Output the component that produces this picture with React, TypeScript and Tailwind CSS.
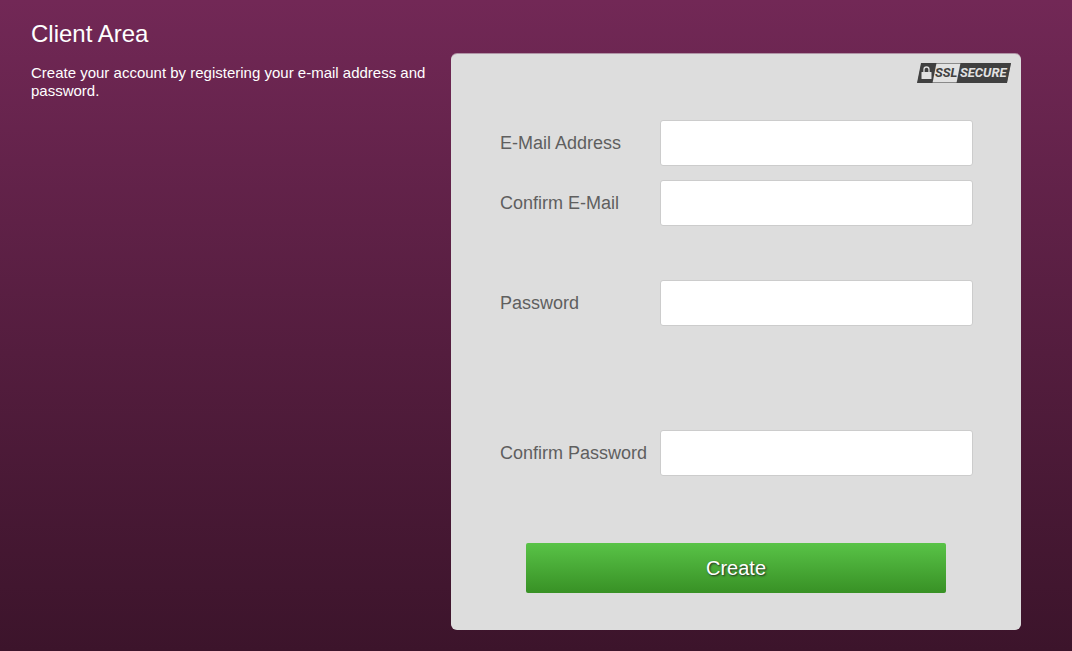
import { useState } from "react";
import type { FormEvent } from "react";

type Field = {
  id: string;
  label: string;
  type: string;
  space: string;
};

const fields: Field[] = [
  { id: "email", label: "E-Mail Address", type: "email", space: "" },
  { id: "confirmEmail", label: "Confirm E-Mail", type: "email", space: "mt-3.5" },
  { id: "password", label: "Password", type: "password", space: "mt-[54px]" },
  { id: "confirmPassword", label: "Confirm Password", type: "password", space: "mt-[104px]" },
];

const SslBadge = () => (
  <svg width="94" height="20" viewBox="0 0 94 20" role="img" aria-label="SSL Secure">
    <path d="M5 0.5H93.5L89.5 19.5H1Z" fill="#e2e2e2" stroke="#8a8a8a" />
    <path d="M4 0H19.5L15.5 20H0Z" fill="#404040" />
    <path d="M43.5 0H94L90 20H39.5Z" fill="#404040" />
    <path d="M7 9V6.500a2.500 2.500 0 0 1 5 0V9" fill="none" stroke="#dcdcdc" strokeWidth="1.300" />
    <rect x="4.500" y="9" width="10" height="7" rx="0.500" fill="#e2e2e2" />
    <text x="18" y="14" fill="#404040" className="font-['Roboto',sans-serif] text-[13px] font-bold italic">
      SSL
    </text>
    <text x="43" y="14" fill="#e2e2e2" className="font-['Roboto',sans-serif] text-[13px] font-bold italic">
      SECURE
    </text>
  </svg>
);

export default function App() {
  const [values, setValues] = useState<Record<string, string>>({});

  const handleSubmit = (event: FormEvent) => {
    event.preventDefault();
  };

  return (
    <main className="flex min-h-screen items-start bg-linear-to-b from-[#722856] to-[#3c142b] pl-[31px] pr-[51px] font-['Liberation_Sans',Arial,sans-serif]">
      <section className="min-w-0 flex-1 pt-5 text-white">
        <h1 className="text-2xl leading-7">Client Area</h1>
        <p className="mt-4 text-[15px] leading-[18px]">
          Create your account by registering your e-mail address and password.
        </p>
      </section>

      <form
        onSubmit={handleSubmit}
        className="mt-[54px] mb-5 w-full max-w-[570px] shrink-0 rounded-md bg-[#dddddd] pb-[37px] shadow-[0_-1px_0_#b094a6]"
      >
        <div className="flex justify-end pt-[9px] pr-2.5">
          <SslBadge />
        </div>

        <div className="mt-[37px] pr-12 pl-[49px]">
          {fields.map((field) => (
            <div key={field.id} className={`flex items-center ${field.space}`}>
              <label htmlFor={field.id} className="w-40 shrink-0 text-lg text-[#5f5f5f]">
                {field.label}
              </label>
              <input
                id={field.id}
                type={field.type}
                value={values[field.id] ?? ""}
                onChange={(e) => setValues({ ...values, [field.id]: e.target.value })}
                className="h-[46px] min-w-0 flex-1 rounded-[3px] border border-[#cccccc] bg-white px-3 text-lg text-[#5f5f5f]"
              />
            </div>
          ))}
        </div>

        <div className="mt-[67px] px-[75px]">
          <button
            type="submit"
            className="h-[50px] w-full cursor-pointer rounded-xs bg-linear-to-b from-[#59c347] to-[#389125] text-xl text-white [text-shadow:1px_1px_2px_#222222]"
          >
            Create
          </button>
        </div>
      </form>
    </main>
  );
}
